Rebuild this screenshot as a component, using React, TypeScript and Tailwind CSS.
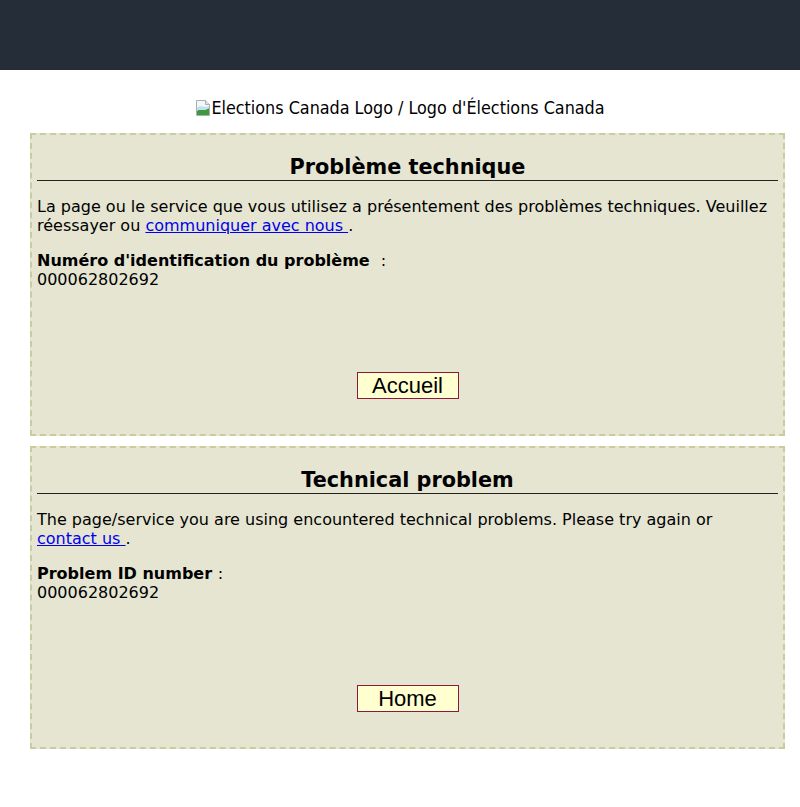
export default function App() {
  return (
    <div className="min-h-[807px] bg-white text-black" style={{ fontFamily: '"DejaVu Sans", Verdana, sans-serif' }}>
      <header className="h-[70px] bg-[#242d38]" />
      <div className="flex h-[63px] items-center justify-center pt-[13px]">
        <span className="flex items-center text-[17.8px] leading-[20px] [font-family:'DejaVu_Sans_Condensed',sans-serif]">
          <svg width="16" height="16" viewBox="0 0 16 16">
            <path d="M1.5 0.5h9l4 4v11h-13z" fill="#f4f6f8" stroke="#a7b0b8" />
            <path d="M10.5 0.5v4h4" fill="#dde3e8" stroke="#a7b0b8" />
            <path d="M2 15v-4c3-3 6 1 12-3v7z" fill="#3e9a3a" />
            <path d="M2 11c3-3 6 1 12-3v-2c-5 3-8-2-12 2z" fill="#bfe0f2" />
          </svg>
          Elections Canada Logo / Logo d'Élections Canada
        </span>
      </div>

      <div className="ml-[30px] flex w-[755px] flex-col gap-[10px]">
        <ErrorBox
          title="Problème technique"
          text={
            <>
              La page ou le service que vous utilisez a présentement des problèmes techniques. Veuillez réessayer ou{' '}
              <a href="#" className="whitespace-nowrap text-[#0000ee] underline">communiquer avec nous </a>.
            </>
          }
          label={'Numéro d\'identification du problème\u00a0\u00a0'}
          button="Accueil"
        />
        <ErrorBox
          title="Technical problem"
          text={
            <>
              The page/service you are using encountered technical problems. Please try again or{' '}
              <a href="#" className="whitespace-nowrap text-[#0000ee] underline">contact us </a>.
            </>
          }
          label={'Problem ID number\u00a0'}
          button="Home"
        />
      </div>
    </div>
  )
}

function ErrorBox({ title, text, label, button }: { title: string; text: React.ReactNode; label: string; button: string }) {
  return (
    <div className="h-[303px] border-2 border-dashed border-[#c8cd9e] bg-[#e5e5d2] px-[5px] pt-[16px]">
      <h2 className="border-b border-[#222] pt-[3px] text-center text-[20.8px] font-bold leading-[26px]">{title}</h2>
      <p className="mt-[16px] text-[16px] leading-[19px]">{text}</p>
      <p className="mt-[16px] text-[16px] leading-[19px]">
        <b>{label}</b>:
        <br />
        000062802692
      </p>
      <div className="mt-[83px] flex justify-center">
        <button className="h-[27px] w-[102px] border border-[#8b1a3a] bg-[#ffffd0] text-[22px] leading-[25px] [font-family:'Liberation_Sans',Arial,sans-serif]">
          {button}
        </button>
      </div>
    </div>
  )
}
